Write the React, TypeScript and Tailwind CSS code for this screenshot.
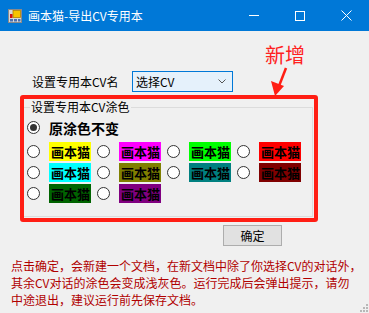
import React from "react";

const Radio = ({ checked = false }: { checked?: boolean }) => (
  <span className="w-[13px] h-[13px] rounded-full border border-[#333333] bg-white flex items-center justify-center shrink-0">
    {checked && <span className="w-[7px] h-[7px] rounded-full bg-[#333333]" />}
  </span>
);

const Swatch = ({ bg }: { bg: string }) => (
  <span
    className="w-[42px] h-[19px] pl-[2px] text-[13px] leading-[19px] font-bold text-black whitespace-nowrap overflow-hidden"
    style={{ backgroundColor: bg }}
  >
    画本猫
  </span>
);

const rows: string[][] = [
  ["#ffff00", "#ff00ff", "#00ff00", "#ff0000"],
  ["#00ffff", "#808000", "#008080", "#800000"],
  ["#006400", "#800080"],
];

export default function App() {
  return (
    <div className="w-[369px] h-[313px] bg-[#f0f0f0] relative overflow-hidden font-['Noto_Sans_CJK_SC',sans-serif] text-[12px] text-black">
      {/* Title bar */}
      <div className="h-[31px] bg-[#0078d7] flex items-center">
        <svg width="14" height="14" viewBox="0 0 14 14" className="ml-[8px] shrink-0">
          <rect x="0.5" y="0.5" width="13" height="13" fill="#d8d8d8" stroke="#8a8a8a" />
          <rect x="5" y="1.5" width="7.5" height="7" fill="#f7c400" stroke="#b08000" strokeWidth="0.8" />
          <rect x="2" y="5" width="2.5" height="4" fill="#d01010" />
          <rect x="2" y="10" width="3" height="2.5" fill="#4a6fb0" />
          <rect x="6" y="10" width="3" height="2.5" fill="#4a6fb0" />
          <rect x="10" y="10" width="2.5" height="2.5" fill="#4a6fb0" />
        </svg>
        <span className="ml-[6px] text-white text-[12px] leading-[16px]">画本猫-导出CV专用本</span>
        <div className="ml-auto flex h-full">
          <div className="w-[46px] h-full flex items-center justify-center">
            <span className="w-[10px] h-[1px] bg-white" />
          </div>
          <div className="w-[46px] h-full flex items-center justify-center">
            <span className="w-[10px] h-[10px] border border-white" />
          </div>
          <div className="w-[46px] h-full flex items-center justify-center">
            <svg width="11" height="11" viewBox="0 0 11 11">
              <path d="M0.5 0.5 L10.5 10.5 M10.5 0.5 L0.5 10.5" stroke="white" strokeWidth="1" />
            </svg>
          </div>
        </div>
      </div>

      {/* CV name row */}
      <div className="flex items-center mt-[40px] h-[21px]">
        <span className="ml-[32px] w-[100px] leading-[21px]">设置专用本CV名</span>
        <div className="w-[101px] h-[21px] border border-[#0078d7] bg-[#e5f1fb] flex items-center">
          <span className="ml-[3px] leading-[19px]">选择CV</span>
          <svg width="8" height="5" viewBox="0 0 8 5" className="ml-auto mr-[6px]">
            <path d="M0.5 0.5 L4 4 L7.5 0.5" stroke="#555" fill="none" strokeWidth="1" />
          </svg>
        </div>
      </div>

      {/* Red annotation box containing group */}
      <div className="ml-[20px] mt-[3px] w-[298px] h-[127px] border-[4px] border-[#ff1e14] rounded-[3px] pt-[2px] pr-[1px] pb-[1px]">
        <fieldset className="h-full m-0 p-0 border-t border-r border-b border-l-0 border-[#dcdcdc]">
          <legend className="ml-[6px] px-[1px] text-[12px] leading-[12px]">设置专用本CV涂色</legend>
          <div className="mt-[8px] ml-[3px] flex items-center h-[13px]">
            <Radio checked />
            <span className="ml-[9px] text-[14px] leading-[14px] font-bold">原涂色不变</span>
          </div>
          <div className="mt-[8px] ml-[3px] flex flex-col gap-[2px]">
            {rows.map((row, i) => (
              <div key={i} className="flex">
                {row.map((c, j) => (
                  <div key={j} className="w-[70px] flex items-center">
                    <Radio />
                    <span className="ml-[9px] flex">
                      <Swatch bg={c} />
                    </span>
                  </div>
                ))}
              </div>
            ))}
          </div>
        </fieldset>
      </div>

      {/* OK button */}
      <div className="ml-[223px] mt-[3px] w-[59px] h-[21px] border border-[#adadad] bg-[#e1e1e1] flex items-center justify-center text-[12px] leading-[19px]">
        确定
      </div>

      {/* Notice text */}
      <p className="mt-[11px] ml-[11px] text-[12px] leading-[17px] text-[#b00000] whitespace-nowrap">
        点击确定，会新建一个文档，在新文档中除了你选择CV的对话外，
        <br />
        其余CV对话的涂色会变成浅灰色。运行完成后会弹出提示，请勿
        <br />
        中途退出，建议运行前先保存文档。
      </p>

      {/* Annotation: 新增 + arrow */}
      <span className="absolute left-[265px] top-[45px] text-[20px] leading-[20px] text-[#ff2020]">新增</span>
      <svg className="absolute left-[260px] top-[64px]" width="40" height="36" viewBox="0 0 40 36">
        <path d="M26 4 L19 22" stroke="#ff1e14" strokeWidth="2.5" fill="none" />
        <polygon points="11,17 24,22 15,32" fill="#ff1e14" />
      </svg>

      {/* Resize grip */}
      <svg className="absolute right-[1px] bottom-[1px]" width="9" height="9" viewBox="0 0 9 9">
        <rect x="7" y="1" width="2" height="2" fill="#b8b8b8" />
        <rect x="4" y="4" width="2" height="2" fill="#b8b8b8" />
        <rect x="7" y="4" width="2" height="2" fill="#b8b8b8" />
        <rect x="1" y="7" width="2" height="2" fill="#b8b8b8" />
        <rect x="4" y="7" width="2" height="2" fill="#b8b8b8" />
        <rect x="7" y="7" width="2" height="2" fill="#b8b8b8" />
      </svg>
    </div>
  );
}
